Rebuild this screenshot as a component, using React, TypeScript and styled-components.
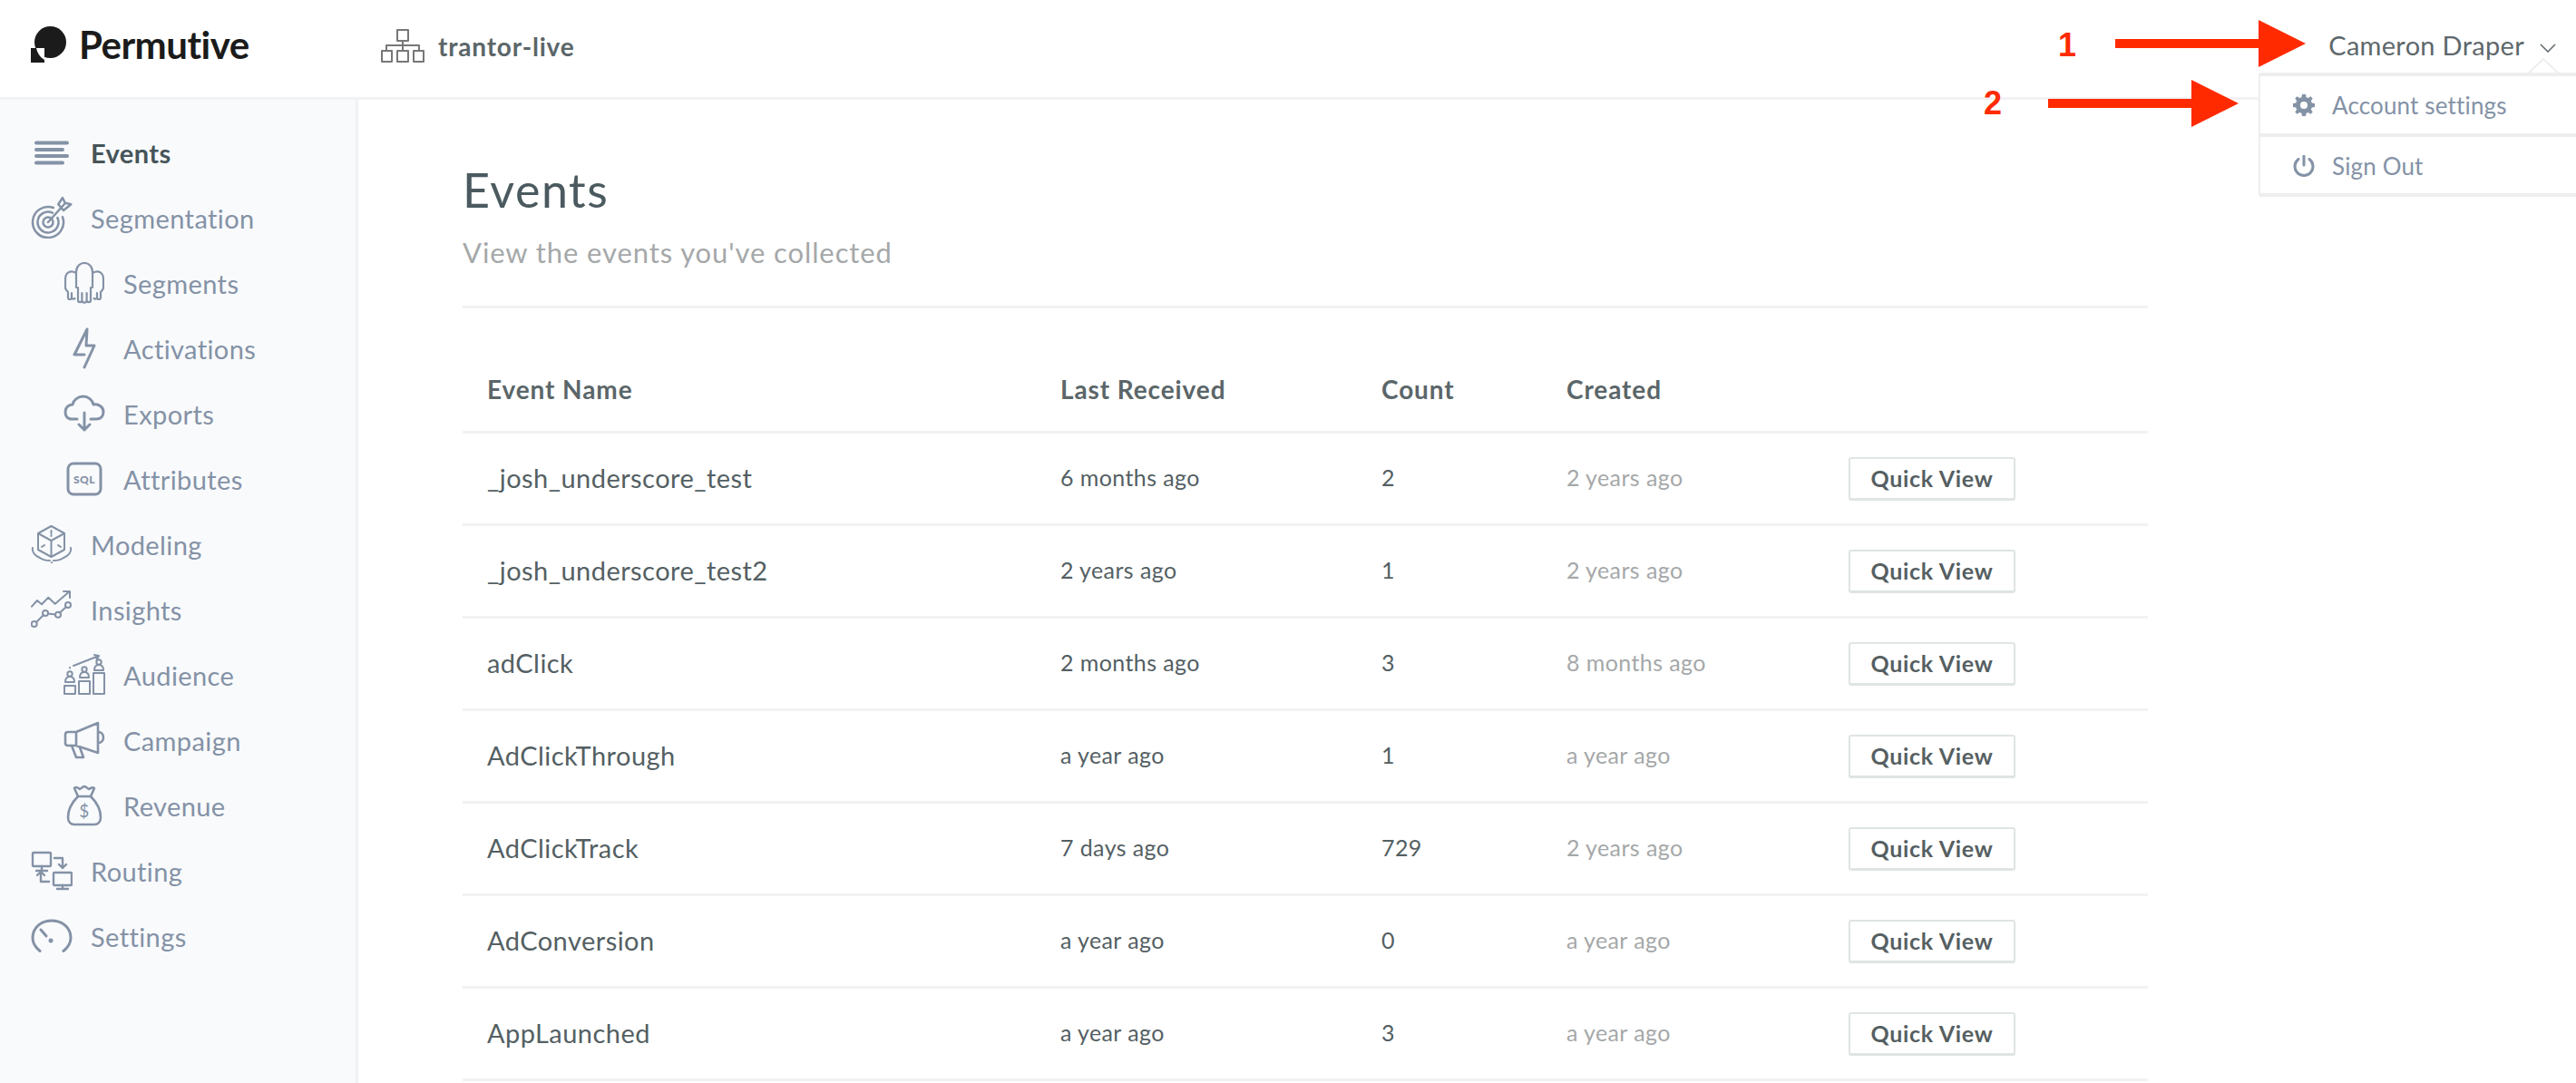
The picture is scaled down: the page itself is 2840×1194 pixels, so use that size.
import React from "react";
import styled, { createGlobalStyle } from "styled-components";

const Global = createGlobalStyle`
  html, body { margin: 0; padding: 0; background: #fff; }
  body { font-family: Lato, "Open Sans", sans-serif; width: 2840px; height: 1194px; overflow: hidden; }
  * { box-sizing: border-box; }
`;

const Page = styled.div`position: relative; width: 2840px; height: 1194px; overflow: hidden;`;
const TopBar = styled.header`display: flex; align-items: center; height: 110px; border-bottom: 3px solid #f1f2f3; padding: 0 0 0 34px;`;
const Shell = styled.div`display: flex; height: 1084px;`;
const Logo = styled.div`display: flex; align-items: center; width: 386px; gap: 14px; padding-bottom: 10px; font-size: 42px; letter-spacing: -0.5px; font-weight: 700; color: #1b1b1b;`;
const Org = styled.div`display: flex; align-items: center; gap: 15px; padding-bottom: 5px; font-size: 28px; letter-spacing: 0.8px; font-weight: 700; color: #5b6669;`;
const UserName = styled.div`margin-left: auto; margin-right: 22px; padding-bottom: 8px; display: flex; align-items: center; gap: 17px; font-size: 29px; letter-spacing: 0.3px; color: #5e686b;`;
const Chevron = styled.svg`margin-top: 6px;`;
const Side = styled.nav`width: 395px; background: #f9fafc; border-right: 3px solid #f1f2f3;`;
const Main = styled.main`flex: 1; padding: 0 0 0 115px; width: 1858px;`;
const Inner = styled.div`width: 1858px;`;
const SideList = styled.div`padding-top: 22px;`;
const Item = styled.div<{ $sub?: boolean; $active?: boolean }>`
  display: flex; align-items: center; height: 72px; font-size: 29px; letter-spacing: 0.4px;
  padding-left: ${p => (p.$sub ? 68 : 32)}px; color: ${p => (p.$active ? "#465459" : "#8492a6")};
  font-weight: ${p => (p.$active ? 700 : 400)};
`;
const IconSlot = styled.span`display: flex; justify-content: center; align-items: center; width: 50px; margin-right: 18px;`;
const Title = styled.h1`margin: 0; padding-top: 64px; font-size: 52px; line-height: 70px; letter-spacing: 1.5px; font-weight: 400; color: #4b5a5f;`;
const Subtitle = styled.p`margin: 14px 0 0; font-size: 31px; line-height: 40px; letter-spacing: 0.9px; color: #a5a8a9; padding-bottom: 39px; border-bottom: 3px solid #f1f2f3;`;
const Row = styled.div<{ $head?: boolean }>`
  display: grid; grid-template-columns: 632px 354px 204px 311px 1fr; align-items: center;
  height: ${p => (p.$head ? 138 : 102)}px; padding: ${p => (p.$head ? "42px 0 0 27px" : "0 0 0 27px")};
  border-bottom: 3px solid #f1f2f3;
`;
const Head = styled.div`font-size: 28px; letter-spacing: 0.9px; font-weight: 700; color: #5b6669;`;
const Name = styled.div`font-size: 29px; letter-spacing: 0.45px; color: #545f63; padding-bottom: 3px;`;
const Cell = styled.div<{ $muted?: boolean }>`font-size: 25px; letter-spacing: 0.4px; padding-bottom: 3px; color: ${p => (p.$muted ? "#a5a8a9" : "#545f63")};`;
const QuickBtn = styled.button`
  width: 184px; height: 48px; background: #fff; border: 2px solid #dfe4e4; border-bottom-width: 3px; border-radius: 3px;
  font-family: inherit; font-size: 25px; letter-spacing: 0.7px; font-weight: 700; color: #565f62; padding: 0;
`;
const Menu = styled.div`
  position: absolute; left: 2490px; top: 80px; width: 350px; height: 137px; background: #fff;
  border: 4px solid #eeeeee; border-right: none; border-radius: 3px 0 0 3px; border-left-width: 2px;
`;
const MenuRow = styled.div<{ $last?: boolean }>`
  display: flex; align-items: center; height: ${p => (p.$last ? 64 : 67)}px; padding-left: 36px; gap: 19px;
  font-size: 26px; letter-spacing: 0.15px; color: #8492a6; ${p => (p.$last ? "" : "border-bottom: 4px solid #eeeeee;")}
`;
const Caret = styled.svg`position: absolute; left: 2786px; top: 64px;`;
const Arrow = styled.svg<{ $x: number; $y: number }>`position: absolute; left: ${p => p.$x}px; top: ${p => p.$y}px;`;
const Mark = styled.div<{ $x: number; $y: number }>`
  position: absolute; left: ${p => p.$x}px; top: ${p => p.$y}px; color: #ff2a00; font: 700 36px "Liberation Sans", sans-serif;
`;

const S: React.FC<{ w: number; h: number; sw?: number; c?: string; children: React.ReactNode }> = ({ w, h, sw = 2.5, c = "#8492a6", children }) => (
  <svg width={w} height={h} viewBox={`0 0 ${w} ${h}`} fill="none" stroke={c} strokeWidth={sw} strokeLinecap="round" strokeLinejoin="round">
    {children}
  </svg>
);

const EventsIcon = () => (
  <S w={38} h={27} sw={4}><path d="M2 2.500h34M2 10h29M2 17h34M2 24.500h29" /></S>
);
const Target = () => (
  <S w={46} h={46}>
    <path d="M24.800 12A17 17 0 1 0 35 22.200" />
    <path d="M23.900 17.600A11.500 11.500 0 1 0 29.400 23.100" />
    <circle cx="19" cy="28" r="5.500" />
    <path d="M19 28L37 8M30.300 8.300L35 1l2.700 5.700 6.600 1.600L36 15z" />
  </S>
);
const People = () => (
  <S w={44} h={46} sw={2.2}>
    <path d="M13 28V11C13 5 17 1 22 1s9 4 9 10v17" />
    <path d="M15 28v14a2.200 2.200 0 0 0 4.400 0V34v8a2.600 2.600 0 0 0 5.200 0V34v8a2.200 2.200 0 0 0 4.400 0V28" />
    <path d="M13 12C6 8 1 12 1 19v9c0 2 1 3 3 5v6a2 2 0 0 0 4 0v-5 5a2 2 0 0 0 3.500 1" />
    <path d="M31 12c7-4 12 0 12 7v9c0 2-1 3-3 5v6a2 2 0 0 1-4 0v-5 5a2 2 0 0 1-3.500 1" />
  </S>
);
const Bolt = () => (
  <S w={26} h={46} sw={3}><path d="M16 2L2 30h11M13 44l11-24H15L16 2" /></S>
);
const Cloud = () => (
  <S w={46} h={42} sw={3}>
    <path d="M15 27H9C4 27 2 23 2 19c0-5 4-8 8-8 1-5 6-9 12-9 5 0 10 4 11 9 6-1 11 3 11 8 0 5-3 8-8 8h-6" />
    <path d="M23 20v19M17 33l6 6 6-6" />
  </S>
);
const Sql = () => (
  <svg width="40" height="38" viewBox="0 0 40 38" fill="none">
    <rect x="2" y="2" width="36" height="34" rx="6" stroke="#8492a6" strokeWidth="3" />
    <text x="20" y="24" textAnchor="middle" fontFamily="Lato, sans-serif" fontWeight="900" fontSize="12" fill="#8492a6">SQL</text>
  </svg>
);
const Cube = () => (
  <S w={46} h={42} sw={2}>
    <path d="M22.500 1L8 9v18l14.500 8L37 27V9zM8 9l14.500 8L37 9M22.500 17v18" />
    <path d="M22.500 6v3M12 24l3-2M33 24l-3-2M22.500 11v1" />
    <path d="M2 25c-1 5 3 9 8 11 3 2 7 3 11 3M44 25c1 5-3 9-8 11-3 2-7 3-11 3M23 41v.500" />
  </S>
);
const Insights = () => (
  <S w={46} h={42} sw={2}>
    <path d="M1 17.700L7 11l5 4.300L19.300 7.700l7.400 7L42.700 1M36 1h7v7" />
    <circle cx="3.700" cy="37" r="3" /><circle cx="16" cy="25" r="3" /><circle cx="30" cy="26.700" r="3" /><circle cx="41" cy="16" r="3" />
    <path d="M6 35l8-8M19 25.500l8 1M32 24.500l7-6.500" />
  </S>
);
const Audience = () => (
  <S w={46} h={46} sw={2}>
    <path d="M11 13L39 2M34 1l5 1-2.500 4.500M7 15v.500" />
    <rect x="1" y="35" width="12" height="9" /><rect x="17" y="30" width="12" height="14" /><rect x="33" y="21" width="12" height="23" />
    <circle cx="7" cy="22" r="2.700" /><circle cx="23" cy="17" r="2.700" /><circle cx="39" cy="9" r="2.700" />
    <path d="M2 31c0-4 2-6 5-6s5 2 5 6zM18 26c0-4 2-6 5-6s5 2 5 6zM34 18c0-4 2-6 5-6s5 2 5 6z" />
  </S>
);
const Megaphone = () => (
  <S w={46} h={42} sw={2.6}>
    <path d="M5 12h9v15H5c-2 0-3-1-3-3v-9c0-2 1-3 3-3zM14 12l24-10v33L14 27zM38 12c4 0 6 3 6 6s-2 6-6 6" />
    <path d="M9 27l5 13h8l-4-11" />
  </S>
);
const Bag = () => (
  <S w={40} h={46} sw={2.6}>
    <path d="M13 13L9 4c3-3 5 1 6 1s3-3 5-3 4 3 5 3 3-3 6-1l-4 9z" />
    <path d="M13 13C6 20 2 27 2 36c0 5 3 8 7 8h22c4 0 7-3 7-8 0-9-4-16-11-23" />
    <text x="20" y="36" textAnchor="middle" fontFamily="Lato, sans-serif" fontSize="19" fill="#8492a6" stroke="none">$</text>
  </S>
);
const Routing = () => (
  <S w={46} h={44} sw={2.4}>
    <rect x="2" y="2" width="20" height="15" rx="1" /><path d="M12 17v5M6 22h12" />
    <rect x="25" y="24" width="20" height="14" rx="1" /><path d="M35 38v4M29 42h12" />
    <path d="M26 8h9v11M31 15l4 4 4-4M20 34h-9V24M7 27l4-4 4 4" />
  </S>
);
const Gauge = () => (
  <S w={46} h={38} sw={3}>
    <path d="M10 35.500C4.500 31 2 26 2 21 2 10 11 2 23 2s21 8 21 19c0 5-2.500 10-8 14.500" />
    <path d="M11 12l6 7" /><circle cx="22" cy="24" r="2.500" fill="#8492a6" stroke="none" />
  </S>
);

const rows = [
  ["_josh_underscore_test", "6 months ago", "2", "2 years ago"],
  ["_josh_underscore_test2", "2 years ago", "1", "2 years ago"],
  ["adClick", "2 months ago", "3", "8 months ago"],
  ["AdClickThrough", "a year ago", "1", "a year ago"],
  ["AdClickTrack", "7 days ago", "729", "2 years ago"],
  ["AdConversion", "a year ago", "0", "a year ago"],
  ["AppLaunched", "a year ago", "3", "a year ago"],
];

const nav: [string, React.ReactNode, boolean?][] = [
  ["Events", <EventsIcon />],
  ["Segmentation", <Target />],
  ["Segments", <People />, true],
  ["Activations", <Bolt />, true],
  ["Exports", <Cloud />, true],
  ["Attributes", <Sql />, true],
  ["Modeling", <Cube />],
  ["Insights", <Insights />],
  ["Audience", <Audience />, true],
  ["Campaign", <Megaphone />, true],
  ["Revenue", <Bag />, true],
  ["Routing", <Routing />],
  ["Settings", <Gauge />],
];

export default function App() {
  return (
    <Page>
      <Global />
      <TopBar>
        <Logo>
          <svg width="39" height="40" viewBox="0 0 39 40">
            <circle cx="21.500" cy="17.500" r="17.500" fill="#1b1b1b" />
            <rect x="0" y="24" width="15" height="16" fill="#fff" />
            <path d="M0 24h6c1 5 4 10 9 13v3H0z" fill="#1b1b1b" />
          </svg>
          Permutive
        </Logo>
        <Org>
          <S w={48} h={38} sw={2} c="#777">
            <rect x="18" y="1" width="12" height="12" /><rect x="1" y="24" width="11" height="12" /><rect x="18" y="24" width="12" height="12" /><rect x="36" y="24" width="11" height="12" />
            <path d="M24 13v11M6 24v-6h36v6" />
          </S>
          trantor-live
        </Org>
        <UserName>
          Cameron Draper
          <Chevron width="18" height="10" viewBox="0 0 18 10" fill="none" stroke="#5e686b" strokeWidth="1.500"><path d="M1 1l8 8 8-8" /></Chevron>
        </UserName>
      </TopBar>
      <Shell>
        <Side>
          <SideList>
            {nav.map(([label, icon, sub], i) => (
              <Item key={label} $sub={sub} $active={i === 0}>
                <IconSlot>{icon}</IconSlot>
                {label}
              </Item>
            ))}
          </SideList>
        </Side>
        <Main>
          <Inner>
            <Title>Events</Title>
            <Subtitle>View the events you've collected</Subtitle>
            <Row $head>
              <Head>Event Name</Head><Head>Last Received</Head><Head>Count</Head><Head>Created</Head><div />
            </Row>
            {rows.map(r => (
              <Row key={r[0]}>
                <Name>{r[0]}</Name><Cell>{r[1]}</Cell><Cell>{r[2]}</Cell><Cell $muted>{r[3]}</Cell>
                <div><QuickBtn>Quick View</QuickBtn></div>
              </Row>
            ))}
          </Inner>
        </Main>
      </Shell>
      <Caret width="36" height="18" viewBox="0 0 36 18"><path d="M0 18L18 1l18 17" fill="#fff" stroke="#e9e9e9" strokeWidth="1.500" /></Caret>
      <Menu>
        <MenuRow>
          <svg width="24" height="24" viewBox="0 0 24 24" fill="#8492a6"><path d="M14 0l.6 3.200 2.200.9L19.500 2.300l2.200 2.200-1.800 2.700.9 2.200L24 10v4l-3.200.6-.9 2.200 1.800 2.700-2.200 2.200-2.700-1.800-2.200.9L14 24h-4l-.6-3.200-2.200-.9-2.700 1.800-2.200-2.200 1.800-2.700-.9-2.200L0 14v-4l3.200-.6.9-2.200-1.800-2.700 2.200-2.200 2.700 1.800 2.200-.9L10 0zM12 8a4 4 0 1 0 0 8 4 4 0 0 0 0-8z" /></svg>
          Account settings
        </MenuRow>
        <MenuRow $last>
          <svg width="24" height="24" viewBox="0 0 24 24" fill="none" stroke="#8492a6" strokeWidth="3" strokeLinecap="round"><path d="M12 1v10M6 4.500a10 10 0 1 0 12 0" /></svg>
          Sign Out
        </MenuRow>
      </Menu>
      <Mark $x={2269} $y={29}>1</Mark>
      <Mark $x={2187} $y={93}>2</Mark>
      <Arrow $x={2332} $y={22} width="210" height="52" viewBox="0 0 210 52"><path d="M0 21h158V0l52 26-52 26V31H0z" fill="#ff2a00" /></Arrow>
      <Arrow $x={2258} $y={88} width="210" height="52" viewBox="0 0 210 52"><path d="M0 21h158V0l52 26-52 26V31H0z" fill="#ff2a00" /></Arrow>
    </Page>
  );
}
